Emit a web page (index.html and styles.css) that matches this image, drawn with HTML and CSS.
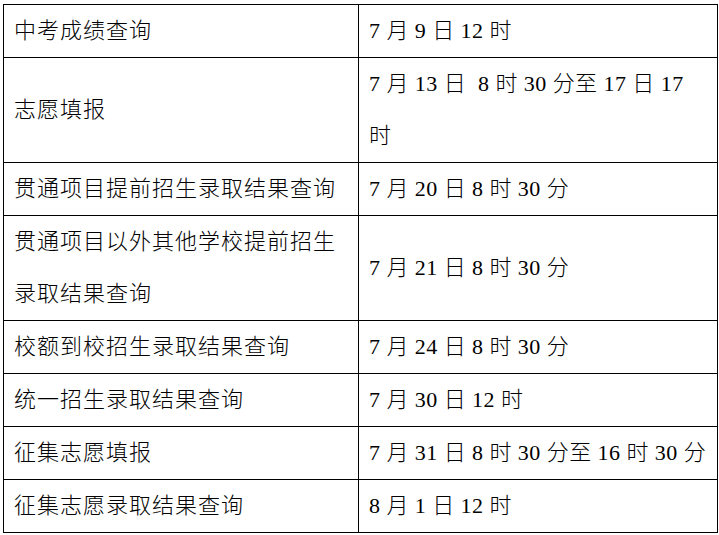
FILE: index.html
```html
<!DOCTYPE html>
<html lang="zh-CN">
<head>
<meta charset="utf-8">
<link rel="stylesheet" href="styles.css">
</head>
<body>
<div class="wrap">
<table class="sched">
<colgroup><col class="c1"><col class="c2"></colgroup>
<tbody>
<tr><td class="name">中考成绩查询</td><td class="time">7 月 9 日 12 时</td></tr>
<tr><td class="name">志愿填报</td><td class="time">7 月 13 日&nbsp; 8 时 30 分至 17 日 17<br>时</td></tr>
<tr><td class="name">贯通项目提前招生录取结果查询</td><td class="time">7 月 20 日 8 时 30 分</td></tr>
<tr><td class="name">贯通项目以外其他学校提前招生<br>录取结果查询</td><td class="time">7 月 21 日 8 时 30 分</td></tr>
<tr><td class="name">校额到校招生录取结果查询</td><td class="time">7 月 24 日 8 时 30 分</td></tr>
<tr><td class="name">统一招生录取结果查询</td><td class="time">7 月 30 日 12 时</td></tr>
<tr><td class="name">征集志愿填报</td><td class="time">7 月 31 日 8 时 30 分至 16 时 30 分</td></tr>
<tr><td class="name">征集志愿录取结果查询</td><td class="time">8 月 1 日 12 时</td></tr>
</tbody>
</table>
</div>
</body>
</html>
```

FILE: styles.css
```css
html, body {
  margin: 0;
  padding: 0;
  background: #ffffff;
}
.wrap {
  padding: 4px 0 0 3px;
}
.sched {
  border-collapse: collapse;
  table-layout: fixed;
  width: 714px;
  font-family: "Liberation Serif", "Noto Sans CJK SC", serif;
  font-size: 22px;
  color: #000000;
}
.c1 { width: 355px; }
.c2 { width: 359px; }
.sched td {
  border: 1px solid #000000;
  padding: 0 0 0 10px;
  line-height: 52px;
  vertical-align: middle;
  white-space: nowrap;
  font-weight: 300;
}
.name {
  letter-spacing: 1px;
}
.time {
  letter-spacing: 0.45px;
}
```
